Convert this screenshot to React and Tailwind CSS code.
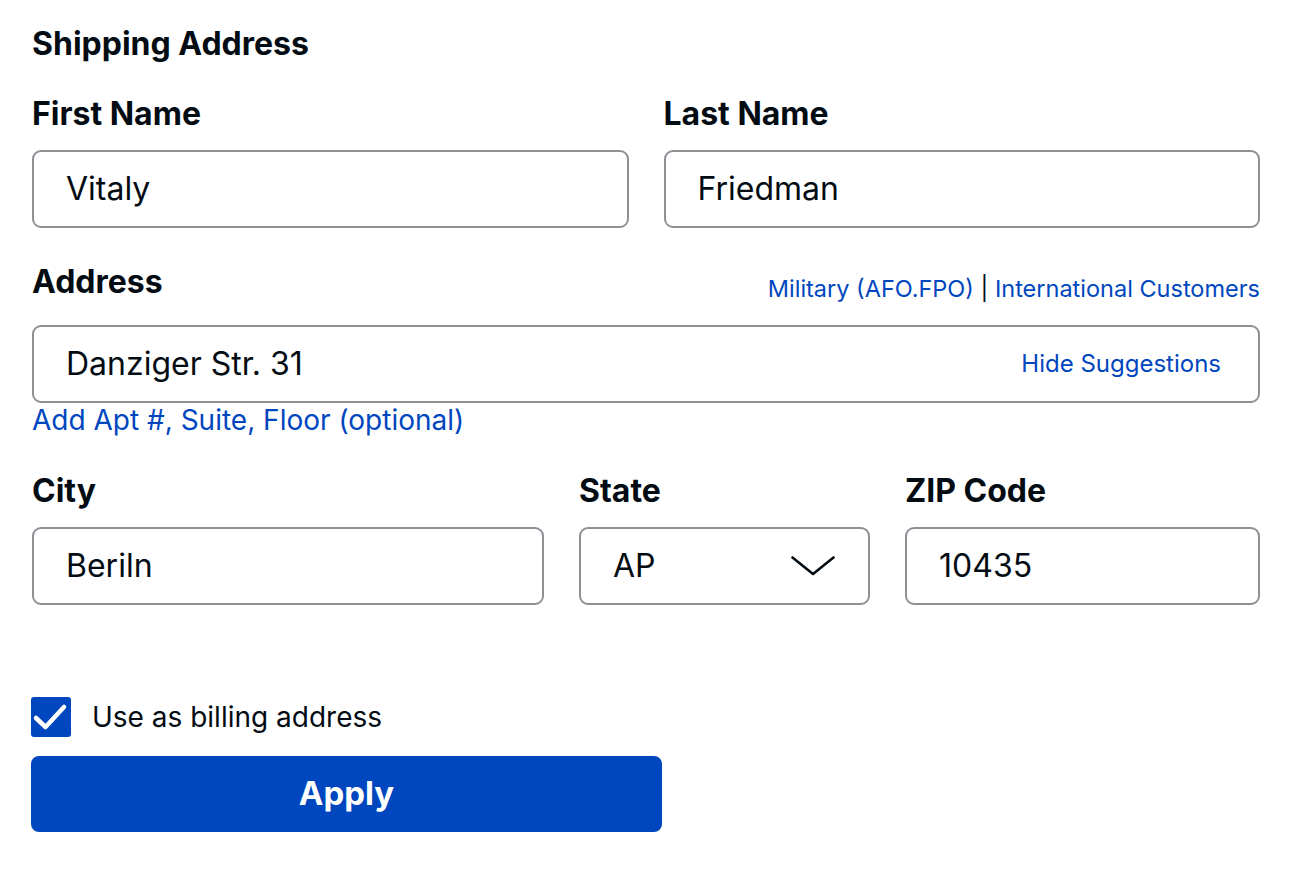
function Label({ children }) {
  return <label className="block text-[32px] leading-[38px] font-bold text-[#040c13]">{children}</label>;
}

function Box({ children, className = "" }) {
  return (
    <div className={`h-[78px] rounded-[9px] border-2 border-[#8e9096] flex items-center ${className}`}>
      {children}
    </div>
  );
}

function Field({ label, value, className = "" }) {
  return (
    <div className={`flex flex-col ${className}`}>
      <Label>{label}</Label>
      <Box className="mt-[17px] pl-[32px]">
        <span className="text-[32px] text-[#040c13]">{value}</span>
      </Box>
    </div>
  );
}

export default function App() {
  return (
    <div
      className="w-[1300px] h-[876px] bg-white pl-[32px] pr-[40px] pt-[25px]"
      style={{ fontFamily: "Inter, 'Liberation Sans', sans-serif" }}
    >
      <h1 className="text-[32px] leading-[38px] font-bold text-[#040c13]">Shipping Address</h1>

      <div className="mt-[32px] grid grid-cols-2 gap-[35px]">
        <Field label="First Name" value="Vitaly" />
        <Field label="Last Name" value="Friedman" />
      </div>

      <div className="mt-[35px] flex flex-col">
        <div className="flex items-end justify-between">
          <Label>Address</Label>
          <div className="text-[23.5px] leading-[30px] text-[#0046be] -mb-[3px]">
            <a>Military (AFO.FPO)</a>
            <span className="text-[#040c13]"> | </span>
            <a>International Customers</a>
          </div>
        </div>
        <Box className="mt-[24px] justify-between pl-[32px] pr-[37px]">
          <span className="text-[32px] text-[#040c13]">Danziger Str. 31</span>
          <a className="text-[24px] text-[#0046be]">Hide Suggestions</a>
        </Box>
        <a className="text-[28px] leading-[34px] text-[#0046be]">Add Apt #, Suite, Floor (optional)</a>
      </div>

      <div className="mt-[35px] flex gap-[35px]">
        <Field label="City" value="Beriln" className="w-[512px]" />
        <div className="flex flex-col w-[291px]">
          <Label>State</Label>
          <Box className="mt-[17px] justify-between pl-[32px] pr-[33px]">
            <span className="text-[32px] text-[#040c13]">AP</span>
            <svg width="44" height="20" viewBox="0 0 44 20" fill="none">
              <polyline
                points="1.5,1.5 22,18 42.5,1.5"
                stroke="#040c13"
                strokeWidth="2.6"
                strokeLinecap="round"
                strokeLinejoin="round"
              />
            </svg>
          </Box>
        </div>
        <Field label="ZIP Code" value="10435" className="flex-1" />
      </div>

      <div className="mt-[91px] -ml-px flex items-center gap-[21px]">
        <div className="w-[40px] h-[40px] rounded-[3px] bg-[#0046be]">
          <svg width="40" height="40" viewBox="0 0 40 40" fill="none">
            <polyline
              points="5,21 14.5,30 33,10"
              stroke="white"
              strokeWidth="4.5"
              strokeLinecap="round"
              strokeLinejoin="round"
            />
          </svg>
        </div>
        <span className="text-[28px] text-[#040c13]">Use as billing address</span>
      </div>

      <button className="mt-[18px] -ml-px w-[631px] h-[76px] rounded-[8px] bg-[#0046be] text-white text-[33px] font-bold">
        Apply
      </button>
    </div>
  );
}
